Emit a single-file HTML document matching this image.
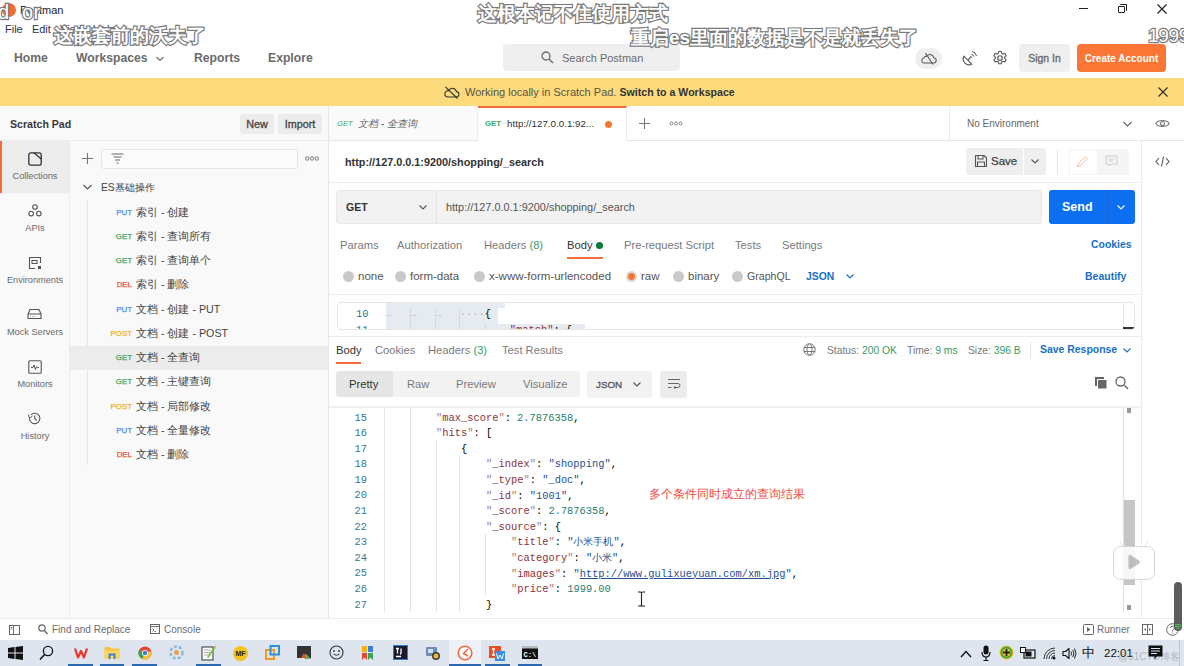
<!DOCTYPE html>
<html><head><meta charset="utf-8">
<style>
*{margin:0;padding:0;box-sizing:border-box}
html,body{width:1184px;height:666px;overflow:hidden;background:#fff}
body{position:relative;font-family:"Liberation Sans",sans-serif;color:#212121;font-size:12px}
.a{position:absolute;white-space:nowrap}
.mono{font-family:"Liberation Mono",monospace}
.nav{font-size:12.2px;font-weight:bold;color:#6b6b6b;top:50.8px;line-height:15px}
.side{font-size:9.2px;color:#6b6b6b;text-align:center;width:70px;left:0;line-height:11px}
.it{font-size:10.7px;color:#444;line-height:14px}
.m{font-size:7.9px;font-weight:normal;-webkit-text-stroke:0.25px currentColor;text-align:right;width:30px;line-height:14px;margin-top:1px}
.put{color:#4f8ff0}.get{color:#3aa96e}.post{color:#f0b12a}.del{color:#e05a3c}
.tab{font-size:11.2px;color:#7a7a7a;line-height:14px;top:238px}
.rad{font-size:11.5px;color:#555;line-height:14px;top:269px}
.dot{position:absolute;width:11px;height:11px;border-radius:50%;background:#c9c9c9;top:271px}
.sub{font-weight:bold;color:#fff;-webkit-text-stroke:0;text-shadow:0 0 1px #555,0 0 1px #555,0 0 2px #888;line-height:20px}
.code{font-family:"Liberation Mono",monospace;font-size:10.4px;line-height:15.6px;color:#000}
.ln{color:#34788c;text-align:right;width:28px;left:339px}
.k{color:#8a3240}.q{color:#a08080}.s{color:#1f4f8f}.n{color:#1f8070}
.subt{font-weight:bold;color:#fff;line-height:22px;-webkit-text-stroke:2.4px #7a7a7a;paint-order:stroke fill}
.guide{position:absolute;width:1px;background:#e3e3e3}
</style></head><body>
<!-- ================= TITLE BAR ================= -->
<div class="a" style="left:0;top:0;width:1184px;height:40px;background:#fff"></div>
<div class="a" style="left:2px;top:3px;width:14px;height:14px;border-radius:50%;background:#f26b3a"></div>
<div class="a" style="left:20px;top:3px;font-size:11px;color:#222;line-height:14px">Postman</div>
<div class="a" style="left:5px;top:22px;font-size:11px;color:#2a3550;line-height:14px">File&nbsp;&nbsp; Edit&nbsp;&nbsp; View&nbsp;&nbsp; Help</div>
<!-- window controls -->
<div class="a" style="left:1079px;top:8px;width:9px;height:1.3px;background:#222"></div>
<div class="a" style="left:1118px;top:6px;width:7px;height:7px;border:1.2px solid #222;border-radius:1px;background:#fff"></div>
<div class="a" style="left:1120px;top:4px;width:7px;height:7px;border-top:1.2px solid #222;border-right:1.2px solid #222;border-radius:1px"></div>
<svg class="a" style="left:1157px;top:4px" width="10" height="10" viewBox="0 0 10 10"><path d="M0.5 0.5L9.5 9.5M9.5 0.5L0.5 9.5" stroke="#222" stroke-width="1.2"/></svg>

<!-- ================= HEADER NAV ================= -->
<div class="a nav" style="left:14px">Home</div>
<div class="a nav" style="left:76px">Workspaces</div>
<svg class="a" style="left:156px;top:56px" width="8" height="6" viewBox="0 0 8 6"><path d="M0.5 1L4 4.5L7.5 1" stroke="#6b6b6b" stroke-width="1.1" fill="none"/></svg>
<div class="a nav" style="left:194px">Reports</div>
<div class="a nav" style="left:268px">Explore</div>
<!-- search -->
<div class="a" style="left:503px;top:44px;width:177px;height:27px;background:#efefef;border-radius:4px"></div>
<svg class="a" style="left:541px;top:51px" width="13" height="13" viewBox="0 0 13 13"><circle cx="5" cy="5" r="4" stroke="#6b6b6b" stroke-width="1.3" fill="none"/><path d="M8 8L12 12" stroke="#6b6b6b" stroke-width="1.4"/></svg>
<div class="a" style="left:562px;top:51px;font-size:11px;color:#6b6b6b;line-height:14px">Search Postman</div>
<!-- right icons -->
<div class="a" style="left:915px;top:48px;width:27px;height:21px;border-radius:11px;background:#efefef"></div>
<svg class="a" style="left:920px;top:52px" width="17" height="13" viewBox="0 0 17 13"><path d="M3.5 11H13.5a2.6 2.6 0 0 0 0.2-5.2 3.6 3.6 0 0 0-6.6-1.6 2.6 2.6 0 0 0-3 1.6A2.7 2.7 0 0 0 3.5 11Z" stroke="#555" stroke-width="1.1" fill="none" stroke-linejoin="round"/><path d="M5.5 1L13 12.5" stroke="#555" stroke-width="1.1"/></svg>
<svg class="a" style="left:962px;top:50px" width="16" height="16" viewBox="0 0 16 16"><path d="M1.8 6.2A6 6 0 0 0 9.8 14.2Z" stroke="#555" stroke-width="1.1" fill="none" stroke-linejoin="round"/><path d="M5.8 10.2L8.8 7.2" stroke="#555" stroke-width="1.1"/><circle cx="8.8" cy="7.2" r="0.9" fill="#555"/><path d="M9.5 4.2a3 3 0 0 1 2.3 2.3M10 1.5a5.5 5.5 0 0 1 4.5 4.5" stroke="#555" stroke-width="1" fill="none"/></svg>
<svg class="a" style="left:992px;top:50px" width="16" height="16" viewBox="0 0 16 16"><circle cx="8" cy="8" r="2.3" stroke="#555" stroke-width="1.1" fill="none"/><path d="M6.7 1.5h2.6l.4 1.9 1.3.7 1.8-.7 1.3 2.2-1.4 1.3v1.5l1.4 1.3-1.3 2.2-1.8-.7-1.3.8-.4 1.8H6.7l-.4-1.8-1.3-.8-1.8.7-1.3-2.2 1.4-1.3V6.9L1.9 5.6l1.3-2.2 1.8.7 1.3-.7z" stroke="#555" stroke-width="1.1" fill="none" stroke-linejoin="round"/></svg>
<div class="a" style="left:1019px;top:44px;width:51px;height:28px;background:#efefef;border-radius:4px"></div>
<div class="a" style="left:1019px;top:51.5px;width:51px;text-align:center;font-size:10.4px;color:#6a6a6a;-webkit-text-stroke:0.35px #6a6a6a;line-height:14px">Sign In</div>
<div class="a" style="left:1077px;top:44px;width:89px;height:28px;background:#fb7634;border-radius:4px"></div>
<div class="a" style="left:1077px;top:51.5px;width:89px;text-align:center;font-size:10px;font-weight:bold;color:#fff;line-height:14px">Create Account</div>

<!-- ================= YELLOW BANNER ================= -->
<div class="a" style="left:0;top:78px;width:1184px;height:28px;background:#fddb7c"></div>
<svg class="a" style="left:444px;top:86px" width="16" height="13" viewBox="0 0 16 13"><path d="M3.5 11H12a2.7 2.7 0 0 0 .4-5.4 4 4 0 0 0-7.6-.9A3 3 0 0 0 3.5 11Z" stroke="#333" stroke-width="1.1" fill="none"/><path d="M1.5 0.8L13.5 12.5" stroke="#333" stroke-width="1.1"/></svg>
<div class="a" style="left:465px;top:85px;font-size:11px;color:#5a5444;line-height:14px">Working locally in Scratch Pad. <b style="color:#333;font-size:10.6px">Switch to a Workspace</b></div>
<svg class="a" style="left:1158px;top:87px" width="10" height="10" viewBox="0 0 10 10"><path d="M0.5 0.5L9.5 9.5M9.5 0.5L0.5 9.5" stroke="#333" stroke-width="1.2"/></svg>

<!-- ================= SCRATCH PAD HEADER ================= -->
<div class="a" style="left:0;top:106px;width:329px;height:35px;background:#f9f9f9;border-bottom:1px solid #ececec;border-right:1px solid #e6e6e6"></div>
<div class="a" style="left:10px;top:117px;font-size:10.6px;font-weight:bold;color:#3a3a3a;line-height:14px">Scratch Pad</div>
<div class="a" style="left:240px;top:114px;width:34px;height:20px;background:#ececec;border-radius:3px;font-size:10.8px;color:#444;-webkit-text-stroke:0.3px #444;text-align:center;line-height:20px">New</div>
<div class="a" style="left:278px;top:114px;width:44px;height:20px;background:#ececec;border-radius:3px;font-size:10.8px;color:#444;-webkit-text-stroke:0.3px #444;text-align:center;line-height:20px">Import</div>

<!-- ================= LEFT ICON COLUMN ================= -->
<div class="a" style="left:0;top:141px;width:70px;height:478px;background:#f9f9f9;border-right:1px solid #ececec"></div>
<div class="a" style="left:0;top:141px;width:69px;height:52px;background:#ececec"></div>
<div class="a" style="left:0;top:141px;width:2px;height:52px;background:#f26b3a"></div>
<div id="sideicons">
<svg class="a" style="left:28px;top:152px" width="14" height="14" viewBox="0 0 14 14"><rect x="0.8" y="0.8" width="12.4" height="12.4" rx="2" stroke="#333" stroke-width="1.3" fill="none"/><path d="M6 0.8L13.2 7" stroke="#333" stroke-width="1.2"/></svg>
<svg class="a" style="left:28px;top:204px" width="14" height="13" viewBox="0 0 14 13"><circle cx="7" cy="3" r="2.3" stroke="#555" stroke-width="1.1" fill="none"/><circle cx="3.2" cy="9.6" r="2.3" stroke="#555" stroke-width="1.1" fill="none"/><circle cx="10.8" cy="9.6" r="2.3" stroke="#555" stroke-width="1.1" fill="none"/></svg>
<svg class="a" style="left:28px;top:256px" width="14" height="14" viewBox="0 0 14 14"><path d="M12.5 7V1.5H1.5V12.5H7" stroke="#555" stroke-width="1.1" fill="none"/><rect x="4" y="4.5" width="5" height="3" stroke="#555" stroke-width="1" fill="none"/><rect x="10" y="10" width="3" height="3" fill="#555"/></svg>
<svg class="a" style="left:27px;top:308px" width="15" height="12" viewBox="0 0 15 12"><path d="M1 6L3 1.5H12L14 6V10.5H1Z" stroke="#555" stroke-width="1.1" fill="none" stroke-linejoin="round"/><path d="M1 6H14M3.5 8.5V9M5.5 8.5V9M7.5 8.5V9" stroke="#555" stroke-width="1"/></svg>
<svg class="a" style="left:28px;top:360px" width="14" height="14" viewBox="0 0 14 14"><rect x="0.8" y="0.8" width="12.4" height="12.4" rx="1" stroke="#555" stroke-width="1.1" fill="none"/><path d="M3 7.5H5L6 5L7.5 9.5L8.5 6.5L9.5 7.5H11" stroke="#555" stroke-width="1" fill="none"/></svg>
<svg class="a" style="left:27px;top:411px" width="15" height="15" viewBox="0 0 15 15"><path d="M2.5 7.5A5.2 5.2 0 1 0 4 3.8" stroke="#555" stroke-width="1.1" fill="none"/><path d="M1.5 3.5L2.5 7.5L5.5 5" stroke="#555" stroke-width="1" fill="none"/><path d="M7.7 4.5V7.8L10 9.2" stroke="#555" stroke-width="1.1" fill="none"/></svg>
</div>
<div class="a side" style="top:171px">Collections</div>
<div class="a side" style="top:223px">APIs</div>
<div class="a side" style="top:275px">Environments</div>
<div class="a side" style="top:327px">Mock Servers</div>
<div class="a side" style="top:379px">Monitors</div>
<div class="a side" style="top:431px">History</div>

<!-- ================= COLLECTIONS PANEL ================= -->
<div class="a" style="left:70px;top:141px;width:259px;height:478px;background:#f9f9f9;border-right:1px solid #e6e6e6"></div>
<div id="colpanel">
<svg class="a" style="left:82px;top:153px" width="11" height="11" viewBox="0 0 11 11"><path d="M5.5 0V11M0 5.5H11" stroke="#777" stroke-width="1.1"/></svg>
<div class="a" style="left:101px;top:149px;width:197px;height:20px;background:#fbfbfb;border:1px solid #e6e6e6;border-radius:3px"></div>
<svg class="a" style="left:111px;top:153px" width="13" height="11" viewBox="0 0 13 11"><path d="M0.5 1H12.5M2.5 4H10.5M4 7H9M5.5 10H7.5" stroke="#666" stroke-width="1"/></svg>
<svg class="a" style="left:305px;top:156px" width="14" height="5" viewBox="0 0 14 5"><circle cx="2.2" cy="2.5" r="1.7" stroke="#777" stroke-width="1" fill="none"/><circle cx="7" cy="2.5" r="1.7" stroke="#777" stroke-width="1" fill="none"/><circle cx="11.8" cy="2.5" r="1.7" stroke="#777" stroke-width="1" fill="none"/></svg>
<svg class="a" style="left:83px;top:184px" width="9" height="6" viewBox="0 0 9 6"><path d="M0.5 1L4.5 5L8.5 1" stroke="#555" stroke-width="1.1" fill="none"/></svg>
<div class="a it" style="left:101px;top:181px;font-size:10.3px">ES基础操作</div>
<div class="a" style="left:87px;top:200px;width:1px;height:265px;background:#e6e6e6"></div>
<div class="a" style="left:70px;top:346px;width:258px;height:24px;background:#ececec"></div>
<div class="a m put" style="left:102px;top:205px">PUT</div><div class="a it" style="left:136px;top:205px">索引 - 创建</div>
<div class="a m get" style="left:102px;top:229px">GET</div><div class="a it" style="left:136px;top:229px">索引 - 查询所有</div>
<div class="a m get" style="left:102px;top:253px">GET</div><div class="a it" style="left:136px;top:253px">索引 - 查询单个</div>
<div class="a m del" style="left:102px;top:277px">DEL</div><div class="a it" style="left:136px;top:277px">索引 - 删除</div>
<div class="a m put" style="left:102px;top:302px">PUT</div><div class="a it" style="left:136px;top:302px">文档 - 创建 - PUT</div>
<div class="a m post" style="left:102px;top:326px">POST</div><div class="a it" style="left:136px;top:326px">文档 - 创建 - POST</div>
<div class="a m get" style="left:102px;top:350px">GET</div><div class="a it" style="left:136px;top:350px">文档 - 全查询</div>
<div class="a m get" style="left:102px;top:374px">GET</div><div class="a it" style="left:136px;top:374px">文档 - 主键查询</div>
<div class="a m post" style="left:102px;top:399px">POST</div><div class="a it" style="left:136px;top:399px">文档 - 局部修改</div>
<div class="a m put" style="left:102px;top:423px">PUT</div><div class="a it" style="left:136px;top:423px">文档 - 全量修改</div>
<div class="a m del" style="left:102px;top:447px">DEL</div><div class="a it" style="left:136px;top:447px">文档 - 删除</div>
</div>

<!-- ================= MAIN ================= -->
<div id="main">
<!-- tabs row -->
<div class="a" style="left:329px;top:106px;width:855px;height:35px;background:#fff;border-bottom:1px solid #e6e6e6"></div>
<div class="a" style="left:329px;top:106px;width:149px;height:34px;background:#fafafa;border-right:1px solid #ececec"></div>
<div class="a" style="left:337px;top:118px;font-size:7.6px;color:#3aa96e;font-style:italic;line-height:12px">GET</div>
<div class="a" style="left:358px;top:117px;font-size:10px;color:#666;font-style:italic;line-height:14px">文档 - 全查询</div>
<div class="a" style="left:478px;top:106px;width:149px;height:35px;background:#fff;border-top:2px solid #f26b3a;border-right:1px solid #ececec"></div>
<div class="a" style="left:485px;top:118px;font-size:7.8px;color:#3aa96e;font-weight:bold;line-height:12px">GET</div>
<div class="a" style="left:507px;top:117px;font-size:9.8px;color:#333;line-height:14px">http://127.0.0.1:92...</div>
<div class="a" style="left:605px;top:121px;width:7px;height:7px;border-radius:50%;background:#f77a2a"></div>
<svg class="a" style="left:639px;top:118px" width="11" height="11" viewBox="0 0 11 11"><path d="M5.5 0V11M0 5.5H11" stroke="#777" stroke-width="1.1"/></svg>
<svg class="a" style="left:669px;top:121px" width="14" height="5" viewBox="0 0 14 5"><circle cx="2.5" cy="2.5" r="1.5" stroke="#777" stroke-width="0.9" fill="none"/><circle cx="7" cy="2.5" r="1.5" stroke="#777" stroke-width="0.9" fill="none"/><circle cx="11.5" cy="2.5" r="1.5" stroke="#777" stroke-width="0.9" fill="none"/></svg>
<div class="a" style="left:949px;top:106px;width:1px;height:34px;background:#ececec"></div>
<div class="a" style="left:967px;top:117px;font-size:10px;color:#666;line-height:14px">No Environment</div>
<svg class="a" style="left:1123px;top:121px" width="9" height="6" viewBox="0 0 9 6"><path d="M0.5 1L4.5 5L8.5 1" stroke="#666" stroke-width="1.1" fill="none"/></svg>
<svg class="a" style="left:1155px;top:118px" width="15" height="11" viewBox="0 0 15 11"><path d="M0.8 5.5C3 1.5 12 1.5 14.2 5.5C12 9.5 3 9.5 0.8 5.5Z" stroke="#777" stroke-width="1.1" fill="none"/><circle cx="7.5" cy="5.5" r="2" stroke="#777" stroke-width="1.1" fill="none"/></svg>
<!-- right column -->
<div class="a" style="left:1141px;top:141px;width:1px;height:478px;background:#ececec"></div>
<svg class="a" style="left:1155px;top:155px" width="15" height="13" viewBox="0 0 15 13"><path d="M4 3L1 6.5L4 10M11 3L14 6.5L11 10M8.5 1.5L6.5 11.5" stroke="#555" stroke-width="1.1" fill="none"/></svg>
<!-- url title row -->
<div class="a" style="left:329px;top:182px;width:812px;height:1px;background:#ececec"></div>
<div class="a" style="left:345px;top:155px;font-size:10.85px;font-weight:bold;color:#333;line-height:14px">http://127.0.0.1:9200/shopping/_search</div>
<div class="a" style="left:966px;top:148px;width:57px;height:27px;background:#efefef;border-radius:3px 0 0 3px"></div>
<div class="a" style="left:1024px;top:148px;width:22px;height:27px;background:#efefef;border-radius:0 3px 3px 0"></div>
<svg class="a" style="left:974px;top:154px" width="14" height="14" viewBox="0 0 14 14"><path d="M1.5 1.5H10L12.5 4V12.5H1.5Z" stroke="#555" stroke-width="1.1" fill="none" stroke-linejoin="round"/><path d="M4 1.5V5H9V1.5M3.5 12.5V8H10.5V12.5" stroke="#555" stroke-width="1.1" fill="none"/></svg>
<div class="a" style="left:991px;top:154px;font-size:11.5px;color:#444;line-height:14px;-webkit-text-stroke:0.25px #444">Save</div>
<svg class="a" style="left:1031px;top:159px" width="8" height="5" viewBox="0 0 8 5"><path d="M0.5 0.5L4 4L7.5 0.5" stroke="#555" stroke-width="1.1" fill="none"/></svg>
<div class="a" style="left:1057px;top:150px;width:1px;height:24px;background:#e6e6e6"></div>
<div class="a" style="left:1068px;top:149px;width:61px;height:26px;background:#f5f5f5;border-radius:3px"></div>
<div class="a" style="left:1069px;top:150px;width:28px;height:24px;background:#fff;border-radius:3px"></div>
<svg class="a" style="left:1076px;top:155px" width="13" height="13" viewBox="0 0 13 13"><path d="M1.5 11.5L2.2 8.8L9.5 1.5L11.5 3.5L4.2 10.8Z" stroke="#f5b8a5" stroke-width="1" fill="none"/></svg>
<svg class="a" style="left:1105px;top:155px" width="13" height="12" viewBox="0 0 13 12"><path d="M1 1H12V9H6L4 11V9H1Z" stroke="#ccc" stroke-width="1" fill="none"/><path d="M3.5 4H9.5M3.5 6H8" stroke="#ccc" stroke-width="0.9"/></svg>
<!-- request bar -->
<div class="a" style="left:336px;top:190px;width:706px;height:34px;background:#f2f2f2;border:1px solid #e8e8e8;border-radius:3px"></div>
<div class="a" style="left:436px;top:191px;width:1px;height:32px;background:#e4e4e4"></div>
<div class="a" style="left:346px;top:200px;font-size:10.5px;font-weight:bold;color:#333;line-height:14px">GET</div>
<svg class="a" style="left:419px;top:205px" width="8" height="5" viewBox="0 0 8 5"><path d="M0.5 0.5L4 4L7.5 0.5" stroke="#555" stroke-width="1.1" fill="none"/></svg>
<div class="a" style="left:446px;top:200px;font-size:10.9px;color:#555;line-height:14px">http://127.0.0.1:9200/shopping/_search</div>
<div class="a" style="left:1049px;top:190px;width:86px;height:34px;background:#0b6ff0;border-radius:3px"></div>
<div class="a" style="left:1108px;top:190px;width:1px;height:34px;background:#1a66d8"></div>
<div class="a" style="left:1062px;top:199px;font-size:12.5px;font-weight:bold;color:#fff;line-height:16px">Send</div>
<svg class="a" style="left:1117px;top:205px" width="8" height="5" viewBox="0 0 8 5"><path d="M0.5 0.5L4 4L7.5 0.5" stroke="#fff" stroke-width="1.1" fill="none"/></svg>
<!-- req tabs -->
<div class="a tab" style="left:340px">Params</div>
<div class="a tab" style="left:397px">Authorization</div>
<div class="a tab" style="left:484px">Headers <span style="color:#3a9a66">(8)</span></div>
<div class="a tab" style="left:567px;color:#333">Body</div>
<div class="a" style="left:596px;top:242px;width:7px;height:7px;border-radius:50%;background:#0a7a3a"></div>
<div class="a" style="left:567px;top:257px;width:36px;height:2px;background:#f26b3a"></div>
<div class="a tab" style="left:624px">Pre-request Script</div>
<div class="a tab" style="left:735px">Tests</div>
<div class="a tab" style="left:782px">Settings</div>
<div class="a tab" style="left:1091px;color:#1a6fc4;font-weight:bold;font-size:10.45px">Cookies</div>
<!-- body radio row -->
<div class="dot" style="left:343px"></div><div class="a rad" style="left:358px">none</div>
<div class="dot" style="left:395px"></div><div class="a rad" style="left:410px">form-data</div>
<div class="dot" style="left:474px"></div><div class="a rad" style="left:489px">x-www-form-urlencoded</div>
<div class="dot" style="left:626px;background:#f07a33;border:2px solid #d9d9d9"></div><div class="a rad" style="left:641px">raw</div>
<div class="dot" style="left:673px"></div><div class="a rad" style="left:688px">binary</div>
<div class="dot" style="left:732px"></div><div class="a rad" style="left:747px;font-size:10.6px">GraphQL</div>
<div class="a rad" style="left:806px;top:270px;color:#1a6fc4;font-weight:bold;font-size:10.4px">JSON</div>
<svg class="a" style="left:846px;top:274px" width="8" height="5" viewBox="0 0 8 5"><path d="M0.5 0.5L4 4L7.5 0.5" stroke="#1a6fc4" stroke-width="1.1" fill="none"/></svg>
<div class="a rad" style="left:1085px;color:#1a6fc4;font-weight:bold;font-size:10.5px">Beautify</div>
<div class="a" style="left:329px;top:294px;width:812px;height:1px;background:#ececec"></div>
<!-- request body editor (partial) -->
<div class="a" style="left:337px;top:302px;width:798px;height:28px;background:#fff;border:1px solid #e6e6e6;border-radius:3px;overflow:hidden">
  <div class="a" style="left:48px;top:0px;width:119px;height:5px;background:#e6ebf2"></div>
  <div class="a" style="left:48px;top:5px;width:112px;height:16px;background:#e6ebf2"></div>
  <div class="a" style="left:48px;top:21px;width:199px;height:10px;background:#e6ebf2"></div>
  <div class="a" style="left:72px;top:5px;width:1px;height:30px;background:#d5dae2"></div>
  <div class="a" style="left:97px;top:5px;width:1px;height:30px;background:#d5dae2"></div>
  <div class="a" style="left:121px;top:5px;width:1px;height:30px;background:#d5dae2"></div>
  <div class="a" style="left:147px;top:21px;width:1px;height:10px;background:#d5dae2"></div>
  <div class="a code" style="left:18px;top:4px;color:#237893">10</div>
  <div class="a code" style="left:18px;top:20px;color:#237893">11</div>
  <div class="a code" style="left:47px;top:4px;color:#c8ccd4">→&nbsp;&nbsp;&nbsp;→&nbsp;&nbsp;&nbsp;→&nbsp;&nbsp;&nbsp;<span style="color:#b0b4bb">····</span><span style="color:#000">{</span></div>
  <div class="a code" style="left:47px;top:20px;color:#c8ccd4">→&nbsp;&nbsp;&nbsp;→&nbsp;&nbsp;&nbsp;→&nbsp;&nbsp;&nbsp;→&nbsp;&nbsp;&nbsp;<span style="color:#b0b4bb">····</span><span class="k">"match"</span><span style="color:#000">:·{</span></div>
  <div class="a" style="left:785px;top:0;width:1px;height:28px;background:#e6e6e6"></div>
  <div class="a" style="left:785px;top:24px;width:12px;height:2px;background:#333"></div>
</div>
<!-- response header -->
<div class="a" style="left:329px;top:336px;width:812px;height:1px;background:#ececec"></div>
<div class="a tab" style="left:336px;top:343px;color:#333">Body</div>
<div class="a" style="left:336px;top:362px;width:25px;height:2px;background:#f26b3a"></div>
<div class="a tab" style="left:375px;top:343px">Cookies</div>
<div class="a tab" style="left:428px;top:343px">Headers <span style="color:#3a9a66">(3)</span></div>
<div class="a tab" style="left:502px;top:343px">Test Results</div>
<svg class="a" style="left:803px;top:343px" width="13" height="13" viewBox="0 0 13 13"><circle cx="6.5" cy="6.5" r="5.7" stroke="#777" stroke-width="1" fill="none"/><ellipse cx="6.5" cy="6.5" rx="2.5" ry="5.7" stroke="#777" stroke-width="1" fill="none"/><path d="M1 4.5H12M1 8.5H12" stroke="#777" stroke-width="1"/></svg>
<div class="a" style="left:827px;top:344px;font-size:10.3px;color:#777;line-height:13px">Status: <span style="color:#3a9a66">200 OK</span></div>
<div class="a" style="left:907px;top:344px;font-size:10.3px;color:#777;line-height:13px">Time: <span style="color:#3a9a66">9 ms</span></div>
<div class="a" style="left:968px;top:344px;font-size:10.3px;color:#777;line-height:13px">Size: <span style="color:#3a9a66">396 B</span></div>
<div class="a" style="left:1030px;top:342px;width:1px;height:16px;background:#e6e6e6"></div>
<div class="a" style="left:1040px;top:343px;font-size:10.45px;font-weight:bold;color:#1a6fc4;line-height:14px">Save Response</div>
<svg class="a" style="left:1123px;top:348px" width="8" height="5" viewBox="0 0 8 5"><path d="M0.5 0.5L4 4L7.5 0.5" stroke="#1a6fc4" stroke-width="1.1" fill="none"/></svg>
<!-- segmented -->
<div class="a" style="left:336px;top:371px;width:244px;height:26px;background:#f2f2f2;border-radius:3px"></div>
<div class="a" style="left:336px;top:371px;width:57px;height:26px;background:#e6e6e6;border-radius:3px 0 0 3px"></div>
<div class="a tab" style="left:349px;top:377px;color:#333">Pretty</div>
<div class="a tab" style="left:407px;top:377px">Raw</div>
<div class="a tab" style="left:456px;top:377px">Preview</div>
<div class="a tab" style="left:523px;top:377px">Visualize</div>
<div class="a" style="left:587px;top:371px;width:65px;height:27px;background:#f2f2f2;border-radius:3px"></div>
<div class="a" style="left:596px;top:378px;font-size:9.8px;color:#555;line-height:13px;-webkit-text-stroke:0.3px #555">JSON</div>
<svg class="a" style="left:633px;top:382px" width="8" height="5" viewBox="0 0 8 5"><path d="M0.5 0.5L4 4L7.5 0.5" stroke="#555" stroke-width="1.1" fill="none"/></svg>
<div class="a" style="left:660px;top:371px;width:27px;height:27px;background:#ececec;border-radius:3px"></div>
<svg class="a" style="left:667px;top:378px" width="14" height="12" viewBox="0 0 14 12"><path d="M1 1.5H13M1 5.5H11a2 2 0 0 1 0 4H7M8.5 8L7 9.5L8.5 11M1 9.5H4.5" stroke="#666" stroke-width="1" fill="none"/></svg>
<svg class="a" style="left:1094px;top:376px" width="14" height="14" viewBox="0 0 14 14"><rect x="1" y="1" width="9" height="9" fill="#666"/><rect x="3.5" y="3.5" width="9.5" height="9.5" fill="#666" stroke="#fff" stroke-width="1"/></svg>
<svg class="a" style="left:1115px;top:376px" width="14" height="14" viewBox="0 0 14 14"><circle cx="5.5" cy="5.5" r="4.5" stroke="#666" stroke-width="1.3" fill="none"/><path d="M9 9L13 13" stroke="#666" stroke-width="1.5"/></svg>
<!-- code area -->
<div class="a" style="left:329px;top:406px;width:812px;height:2px;background:#f0f0f0"></div>
<div class="guide" style="left:384px;top:407px;height:205px;background:#e6e6e6"></div>
<div class="guide" style="left:410px;top:407px;height:205px"></div>
<div class="guide" style="left:436px;top:440px;height:172px"></div>
<div class="guide" style="left:459px;top:456px;height:156px"></div>
<div class="guide" style="left:485px;top:534px;height:61px"></div>
<div class="a code ln" style="top:410.5px;line-height:15.6px;text-align:right">15<br>16<br>17<br>18<br>19<br>20<br>21<br>22<br>23<br>24<br>25<br>26<br>27</div>
<div class="a code" style="left:436px;top:410.5px"><span class="q">"</span><span class="k">max_score</span><span class="q">"</span>: <span class="n">2.7876358</span>,</div>
<div class="a code" style="left:436px;top:426.1px"><span class="q">"</span><span class="k">hits</span><span class="q">"</span>: [</div>
<div class="a code" style="left:461px;top:441.7px">{</div>
<div class="a code" style="left:486px;top:457.3px"><span class="q">"</span><span class="k">_index</span><span class="q">"</span>: <span class="s">"shopping"</span>,</div>
<div class="a code" style="left:486px;top:472.9px"><span class="q">"</span><span class="k">_type</span><span class="q">"</span>: <span class="s">"_doc"</span>,</div>
<div class="a code" style="left:486px;top:488.5px"><span class="q">"</span><span class="k">_id</span><span class="q">"</span>: <span class="s">"1001"</span>,</div>
<div class="a code" style="left:486px;top:504.1px"><span class="q">"</span><span class="k">_score</span><span class="q">"</span>: <span class="n">2.7876358</span>,</div>
<div class="a code" style="left:486px;top:519.7px"><span class="q">"</span><span class="k">_source</span><span class="q">"</span>: {</div>
<div class="a code" style="left:511px;top:535.3px"><span class="q">"</span><span class="k">title</span><span class="q">"</span>: <span class="s">"小米手机"</span>,</div>
<div class="a code" style="left:511px;top:550.9px"><span class="q">"</span><span class="k">category</span><span class="q">"</span>: <span class="s">"小米"</span>,</div>
<div class="a code" style="left:511px;top:566.5px"><span class="q">"</span><span class="k">images</span><span class="q">"</span>: <span class="s">"<u>http://www.gulixueyuan.com/xm.jpg</u>"</span>,</div>
<div class="a code" style="left:511px;top:582.1px"><span class="q">"</span><span class="k">price</span><span class="q">"</span>: <span class="n">1999.00</span></div>
<div class="a code" style="left:486px;top:597.7px">}</div>
<div class="a" style="left:649px;top:487px;font-size:12.2px;color:#f24a44;line-height:15px">多个条件同时成立的查询结果</div>
<!-- text cursor -->
<svg class="a" style="left:637px;top:591px" width="9" height="16" viewBox="0 0 9 16"><path d="M1 1H3.5Q4.5 1 4.5 2V14Q4.5 15 3.5 15H1M8 1H5.5Q4.5 1 4.5 2M4.5 14Q4.5 15 5.5 15H8" stroke="#222" stroke-width="1.1" fill="none"/></svg>
<!-- scrollbar -->
<div class="a" style="left:1123px;top:407px;width:1px;height:205px;background:#e0e0e0"></div>
<div class="a" style="left:1127px;top:408px;width:4px;height:5px;background:#999"></div>
<div class="a" style="left:1124px;top:500px;width:11px;height:85px;background:#c6c6c6"></div>
<div class="a" style="left:1127px;top:605px;width:4px;height:5px;background:#999"></div>
<!-- bilibili play overlay -->
<svg class="a" style="left:1110px;top:538px" width="48" height="46" viewBox="0 0 48 46"><path d="M13 9L10 3.5M35 9L38 3.5" stroke="rgba(255,255,255,0.9)" stroke-width="3" stroke-linecap="round"/><path d="M13 9L10 3.5M35 9L38 3.5" stroke="rgba(190,190,190,0.6)" stroke-width="0.8" stroke-linecap="round"/><rect x="3.5" y="8.5" width="41" height="33" rx="7" fill="rgba(255,255,255,0.86)" stroke="rgba(205,205,205,0.8)" stroke-width="1"/><path d="M18.5 18.5Q18.5 16 20.8 17.2L29 22.6Q31 24 29 25.4L20.8 30.8Q18.5 32 18.5 29.5Z" fill="rgba(170,170,170,0.75)"/></svg>
</div>

<!-- ================= STATUS BAR ================= -->
<div class="a" style="left:0;top:618px;width:1184px;height:22px;background:#fff;border-top:1px solid #ececec"></div>
<div id="status">
<svg class="a" style="left:9px;top:625px" width="11" height="10" viewBox="0 0 11 10"><rect x="0.5" y="0.5" width="10" height="9" stroke="#666" stroke-width="1" fill="none"/><path d="M4.5 0.5V9.5M1.8 2.5H3.3M1.8 4H3.3" stroke="#666" stroke-width="0.9"/></svg>
<svg class="a" style="left:38px;top:624px" width="10" height="11" viewBox="0 0 10 11"><circle cx="4" cy="4" r="3.2" stroke="#666" stroke-width="1.2" fill="none"/><path d="M6.3 6.5L9.5 10" stroke="#666" stroke-width="1.4"/></svg>
<div class="a" style="left:52px;top:623px;font-size:10px;color:#6b6b6b;line-height:13px">Find and Replace</div>
<svg class="a" style="left:150px;top:624px" width="10" height="10" viewBox="0 0 10 10"><rect x="0.5" y="0.5" width="9" height="9" stroke="#666" stroke-width="1" fill="none"/><path d="M0.5 2.5H9.5M2.5 4.5L4 6L2.5 7.5M4.5 7.5H6" stroke="#666" stroke-width="0.9" fill="none"/></svg>
<div class="a" style="left:164px;top:623px;font-size:10px;color:#6b6b6b;line-height:13px">Console</div>
<svg class="a" style="left:1083px;top:624px" width="11" height="11" viewBox="0 0 11 11"><rect x="0.5" y="0.5" width="10" height="10" rx="1" stroke="#666" stroke-width="1" fill="none"/><path d="M4 3L7.5 5.5L4 8Z" fill="#666"/></svg>
<div class="a" style="left:1097px;top:623px;font-size:10px;color:#6b6b6b;line-height:13px">Runner</div>
<svg class="a" style="left:1142px;top:624px" width="11" height="11" viewBox="0 0 11 11"><rect x="0.5" y="0.5" width="10" height="10" stroke="#666" stroke-width="1" fill="none"/><path d="M5.5 0.5V10.5" stroke="#666" stroke-width="1"/><path d="M2 5.5L4 4V7Z M9 5.5L7 4V7Z" fill="#666"/></svg>
<svg class="a" style="left:1166px;top:623px" width="13" height="13" viewBox="0 0 13 13"><circle cx="6.5" cy="6.5" r="5.8" stroke="#666" stroke-width="1" fill="none"/><path d="M4.6 5a1.9 1.9 0 1 1 2.6 1.8c-.5.2-.7.6-.7 1.2v.5" stroke="#666" stroke-width="1" fill="none"/><circle cx="6.5" cy="10" r="0.6" fill="#666"/></svg>
</div>

<!-- ================= TASKBAR ================= -->
<div class="a" style="left:0;top:640px;width:1184px;height:26px;background:#dfe5ee"></div>
<div id="taskbar">
<div class="a" style="left:449px;top:640px;width:32px;height:26px;background:#eef1f6"></div>
<div class="a" style="left:68px;top:664px;width:25px;height:2px;background:#2b68b0"></div>
<div class="a" style="left:100px;top:664px;width:24px;height:2px;background:#2b68b0"></div>
<div class="a" style="left:132px;top:664px;width:25px;height:2px;background:#2b68b0"></div>
<div class="a" style="left:196px;top:664px;width:25px;height:2px;background:#2b68b0"></div>
<div class="a" style="left:449px;top:664px;width:32px;height:2px;background:#2b68b0"></div>
<div class="a" style="left:485px;top:664px;width:25px;height:2px;background:#2b68b0"></div>
<div class="a" style="left:518px;top:664px;width:24px;height:2px;background:#2b68b0"></div>
<!-- windows logo -->
<svg class="a" style="left:8px;top:646px" width="15" height="14" viewBox="0 0 15 14"><path d="M0 2L6.5 1V6.5H0Z M7.5 0.9L15 0V6.5H7.5Z M0 7.5H6.5V13L0 12Z M7.5 7.5H15V14L7.5 13.1Z" fill="#111"/></svg>
<svg class="a" style="left:39px;top:645px" width="15" height="16" viewBox="0 0 15 16"><circle cx="9" cy="6" r="4.6" stroke="#111" stroke-width="1.3" fill="none"/><path d="M5.6 9.4L1 14.5" stroke="#111" stroke-width="1.5"/></svg>
<svg class="a" style="left:74px;top:647px" width="14" height="12" viewBox="0 0 14 12"><path d="M1 1.5L4 10.5L7 4L10 10.5L13 1.5" stroke="#e8362c" stroke-width="2.2" fill="none" stroke-linejoin="round"/></svg>
<svg class="a" style="left:104px;top:645px" width="16" height="15" viewBox="0 0 16 15"><path d="M0.5 2H6L7.5 3.5H15.5V14H0.5Z" fill="#f5c342"/><path d="M0.5 5.5H15.5V14H0.5Z" fill="#fbd660"/><path d="M4.5 14V8.5H11.5V14H9.5V10.5H6.5V14Z" fill="#3c7ed8"/></svg>
<svg class="a" style="left:138px;top:646px" width="14" height="14" viewBox="0 0 14 14"><circle cx="7" cy="7" r="6.5" fill="#e5452f"/><path d="M7 7L13.2 5A6.5 6.5 0 0 1 4 12.8Z" fill="#f8c33a"/><path d="M7 7L4 12.8A6.5 6.5 0 0 1 1.2 3.8Z" fill="#34a853"/><circle cx="7" cy="7" r="3" fill="#fff"/><circle cx="7" cy="7" r="2.2" fill="#3b78e7"/></svg>
<svg class="a" style="left:169px;top:645px" width="15" height="15" viewBox="0 0 15 15"><circle cx="7.5" cy="7.5" r="6" fill="none" stroke="#8fb7d8" stroke-width="2.5" stroke-dasharray="3 2"/><circle cx="7.5" cy="7.5" r="2.5" fill="#e8a24a"/></svg>
<svg class="a" style="left:201px;top:645px" width="15" height="16" viewBox="0 0 15 16"><rect x="1" y="2" width="11" height="13" fill="#fff" stroke="#333" stroke-width="1"/><path d="M3 5H10M3 7.5H10M3 10H8" stroke="#999" stroke-width="0.8"/><path d="M6 12L13 2L14.5 3L7.5 13Z" fill="#7bc043"/><path d="M13 2L14 0.5L15 1.5L14.5 3Z" fill="#e8a020"/></svg>
<div class="a" style="left:233px;top:646px;width:15px;height:15px;border-radius:50%;background:#f3c41b;font-size:7px;font-weight:bold;color:#222;text-align:center;line-height:15px">MF</div>
<svg class="a" style="left:265px;top:645px" width="15" height="15" viewBox="0 0 15 15"><rect x="1" y="5" width="8" height="9" fill="none" stroke="#f39a1e" stroke-width="2"/><rect x="5.5" y="1" width="8.5" height="8.5" fill="none" stroke="#2d8fe0" stroke-width="2"/></svg>
<svg class="a" style="left:297px;top:645px" width="15" height="15" viewBox="0 0 15 15"><rect x="0" y="1" width="14" height="12" fill="#333"/><path d="M6 12L9 9L14 14H8Z" fill="#5fb848"/><path d="M4 13L7 8L10 13Z" fill="#e84a3c"/></svg>
<svg class="a" style="left:329px;top:645px" width="15" height="15" viewBox="0 0 15 15"><circle cx="7.5" cy="7.5" r="6.5" fill="none" stroke="#333" stroke-width="1.1"/><circle cx="5" cy="6" r="0.9" fill="#333"/><circle cx="10" cy="6" r="0.9" fill="#333"/><path d="M4.5 9Q7.5 11.8 10.5 9" stroke="#333" stroke-width="1" fill="none"/></svg>
<svg class="a" style="left:361px;top:645px" width="14" height="16" viewBox="0 0 14 16"><rect x="1" y="1" width="5" height="6" fill="#f6b400"/><rect x="7" y="1" width="5" height="6" fill="#3b7fe0"/><path d="M1 8H6V15L3.5 12.5L1 15Z" fill="#e8453a"/><path d="M7 8H12V15L9.5 12.5L7 15Z" fill="#33a852"/></svg>
<svg class="a" style="left:393px;top:645px" width="15" height="15" viewBox="0 0 15 15"><rect x="0" y="0" width="15" height="15" fill="#1a1a2e"/><rect x="0.5" y="0.5" width="14" height="14" fill="none" stroke="#2b7fe0" stroke-width="1"/><path d="M3 3.5H6M4.5 3.5V8.5M8 3.5V8Q8 9 7 9M3 11.5H8" stroke="#fff" stroke-width="1.3" fill="none"/></svg>
<svg class="a" style="left:425px;top:645px" width="16" height="16" viewBox="0 0 16 16"><rect x="1" y="2" width="11" height="9" rx="1" fill="#6d8fb5"/><rect x="3" y="4" width="5" height="4" fill="#cfe0f2"/><circle cx="11" cy="11" r="4" fill="#3d3d3d"/><circle cx="11" cy="11" r="2.5" fill="#e9b53a"/></svg>
<svg class="a" style="left:457px;top:645px" width="16" height="16" viewBox="0 0 16 16"><circle cx="8" cy="8" r="6.8" fill="#fff" stroke="#f26b3a" stroke-width="1.6"/><path d="M11 4L6.5 8.5L11 11" stroke="#f26b3a" stroke-width="1.6" fill="none"/></svg>
<svg class="a" style="left:489px;top:645px" width="16" height="16" viewBox="0 0 16 16"><rect x="0" y="1" width="12" height="12" fill="#e8502c"/><path d="M3 4H6M4.5 4V10M3 10H6" stroke="#fff" stroke-width="1.3"/><rect x="6" y="6" width="10" height="10" fill="#3a8de0"/><path d="M7.5 8.5L9 14L11 10L13 14L14.5 8.5" stroke="#fff" stroke-width="1" fill="none"/></svg>
<svg class="a" style="left:522px;top:646px" width="16" height="13" viewBox="0 0 16 13"><rect x="0" y="0" width="16" height="13" fill="#111"/><rect x="0" y="0" width="16" height="2.5" fill="#bbb"/><text x="1.5" y="10.5" font-size="7" font-family="Liberation Mono" font-weight="bold" fill="#fff">C:\</text></svg>
<!-- tray -->
<svg class="a" style="left:960px;top:650px" width="12" height="8" viewBox="0 0 12 8"><path d="M1 7L6 1.5L11 7" stroke="#111" stroke-width="1.4" fill="none"/></svg>
<svg class="a" style="left:981px;top:645px" width="10" height="16" viewBox="0 0 10 16"><rect x="2.5" y="0.5" width="5" height="9" rx="2.5" fill="#111"/><path d="M1 7Q1 12 5 12Q9 12 9 7M5 12V15M2.5 15.5H7.5" stroke="#111" stroke-width="1.2" fill="none"/></svg>
<svg class="a" style="left:999px;top:645px" width="15" height="15" viewBox="0 0 15 15"><circle cx="7.5" cy="7.5" r="7" fill="#f3c21b"/><circle cx="7.5" cy="7.5" r="5" fill="none" stroke="#3aa64a" stroke-width="2"/><path d="M7.5 4V11M4 7.5H11" stroke="#222" stroke-width="1.8"/></svg>
<svg class="a" style="left:1020px;top:647px" width="16" height="12" viewBox="0 0 16 12"><rect x="4" y="3" width="11" height="8" fill="none" stroke="#111" stroke-width="1.2"/><rect x="5.5" y="4.5" width="6" height="5" fill="#111"/><rect x="0.5" y="0.5" width="5" height="5" fill="#fff" stroke="#111" stroke-width="1"/></svg>
<svg class="a" style="left:1043px;top:647px" width="14" height="13" viewBox="0 0 14 13"><path d="M1 12A11 11 0 0 1 12 1M3.5 12A8.5 8.5 0 0 1 12 3.5M6 12A6 6 0 0 1 12 6M8.5 12A3.5 3.5 0 0 1 12 8.5" stroke="#222" stroke-width="0.9" fill="none"/><circle cx="11" cy="11" r="1.5" fill="#111"/></svg>
<svg class="a" style="left:1062px;top:647px" width="15" height="13" viewBox="0 0 15 13"><path d="M1 4.5H3.5L7 1.5V11.5L3.5 8.5H1Z" fill="none" stroke="#111" stroke-width="1.1" stroke-linejoin="round"/><path d="M9 4.5Q10.2 6.5 9 8.5M10.8 3Q13 6.5 10.8 10M12.5 1.5Q15.5 6.5 12.5 11.5" stroke="#111" stroke-width="0.9" fill="none"/></svg>
<div class="a" style="left:1082px;top:645px;font-size:13px;color:#111;line-height:16px">中</div>
<div class="a" style="left:1104px;top:646px;font-size:11.5px;color:#111;line-height:15px">22:01</div>
<div class="a" style="left:1118px;top:650px;font-size:10px;color:rgba(120,120,120,0.45);line-height:13px">@51CTO博客</div>
<svg class="a" style="left:1148px;top:645px" width="15" height="16" viewBox="0 0 15 16"><path d="M0.5 0.5H14.5V11.5H9L6.5 14.5V11.5H0.5Z" fill="#111"/><path d="M3 3.5H12M3 6H12M3 8.5H9" stroke="#dfe5ee" stroke-width="1"/></svg>
<div class="a" style="left:1179px;top:640px;width:1px;height:26px;background:#c0c6cf"></div>
</div>

<!-- ================= SUBTITLES ================= -->
<div class="a" style="left:1174px;top:582px;width:8px;height:49px;background:#5c5c5c;border-radius:4px"></div><div class="a" style="left:1175px;top:624px;width:6px;height:5px;background:repeating-linear-gradient(#5faa5f 0 1px,#4a7a4a 1px 2px);border-radius:0 0 3px 3px"></div>
<div id="subs">
<div class="a subt" style="left:-2px;top:1px;font-size:20px;font-weight:normal">d</div><div class="a subt" style="left:22px;top:1px;font-size:20px;font-weight:normal;letter-spacing:0.5px">or</div>
<div class="a subt" style="left:54px;top:25px;font-size:19px">这嵌套前的沃夫了</div>
<div class="a subt" style="left:478px;top:3px;font-size:19px">这根本记不住使用方式</div>
<div class="a subt" style="left:631px;top:27px;font-size:19px">重启es里面的数据是不是就丢失了</div>
<div class="a subt" style="left:1148px;top:25px;font-size:19px;font-weight:normal;letter-spacing:-0.3px">1999</div>
</div>
</body></html>
